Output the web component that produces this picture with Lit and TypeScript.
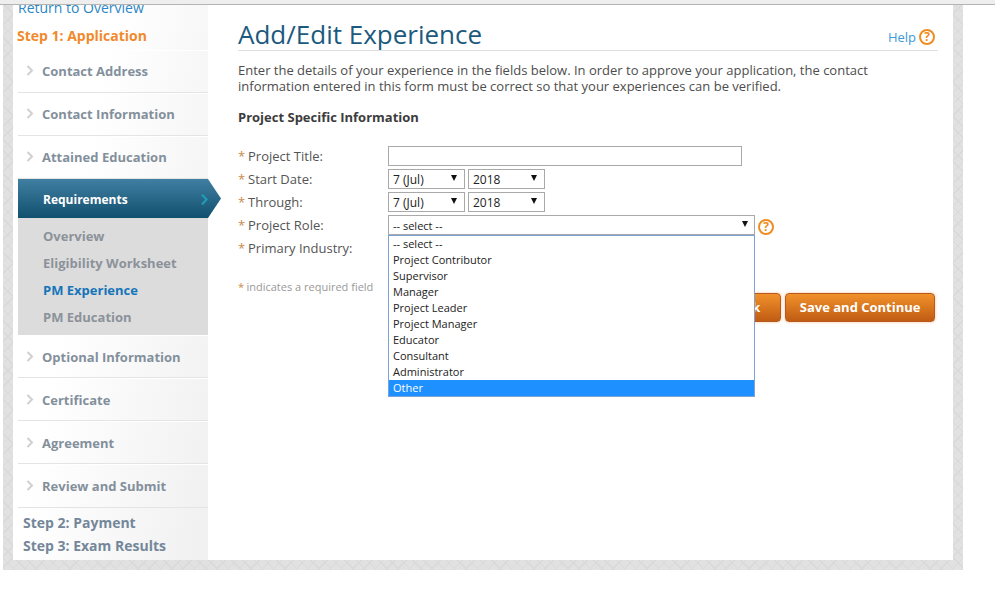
import { LitElement, html, css } from "lit";
import { customElement } from "lit/decorators.js";

const ROLES = [
  "-- select --",
  "Project Contributor",
  "Supervisor",
  "Manager",
  "Project Leader",
  "Project Manager",
  "Educator",
  "Consultant",
  "Administrator",
  "Other",
];

const chevron = html`<svg class="chev" width="8" height="11" viewBox="0 0 8 11"><path d="M1.5 1l4.5 4.5-4.5 4.5" fill="none" stroke="#d0d0d0" stroke-width="2"/></svg>`;
const caret = html`<svg class="caret" width="6" height="6" viewBox="0 0 6 6"><path d="M0 0h6L3 6z" fill="#111"/></svg>`;
const helpIcon = html`<span class="help-icon">?</span>`;

@customElement("app-root")
export class AppRoot extends LitElement {
  static styles = css`
    :host {
      display: block;
      width: 995px;
      height: 590px;
      background: #fff;
      font-family: "Open Sans", "DejaVu Sans", sans-serif;
      overflow: hidden;
    }
    .topbar {
      height: 4px;
      background: #eeeeee;
      border-bottom: 1px solid #b4b4b4;
    }
    .frame {
      margin-left: 3px;
      width: 960px;
      height: 565px;
      box-sizing: border-box;
      padding: 0 10px 10px;
      background-color: #e1e1e1;
      background-image: repeating-linear-gradient(45deg, #d9d9d9 0 1px, transparent 1px 8px),
        repeating-linear-gradient(-45deg, #d9d9d9 0 1px, transparent 1px 8px);
    }
    .inner {
      display: flex;
      height: 555px;
      background: #fff;
      overflow: hidden;
    }
    .side {
      width: 195px;
      flex: none;
      box-sizing: border-box;
      padding-left: 5px;
      background: linear-gradient(100deg, #ffffff 0%, #ffffff 35%, #f0f0f0 100%);
    }
    .return {
      margin-top: -7px;
      height: 20px;
      line-height: 20px;
      font-size: 14px;
      color: #2b86c5;
    }
    .step1 {
      height: 32px;
      line-height: 36px;
      font-size: 14px;
      font-weight: 700;
      color: #f08a2c;
      margin-left: -1px;
    }
    .row {
      display: flex;
      align-items: center;
      height: 43px;
      box-sizing: border-box;
      border-top: 1px solid #fff;
      border-bottom: 1px solid #e4e4e4;
      font-size: 13px;
      font-weight: 700;
      color: #83909c;
    }
    .upper .row {
      padding-bottom: 2px;
    }
    .chev {
      margin-left: 8px;
      margin-right: 8px;
      margin-top: -1px;
      flex: none;
    }
    .active {
      display: flex;
      align-items: center;
      justify-content: space-between;
      position: relative;
      width: 203px;
      height: 39px;
      box-sizing: border-box;
      padding: 1px 13px 0 25px;
      clip-path: polygon(0 0, 190px 0, 203px 50%, 190px 100%, 0 100%);
      background: linear-gradient(#417fa2, #12506f);
      color: #fff;
      font-size: 12px;
      font-weight: 700;
    }
    .sub {
      width: 190px;
      height: 117px;
      box-sizing: border-box;
      padding: 5px 0 0 25px;
      background: #dcdcdc;
      font-size: 13px;
      font-weight: 700;
      color: #8b929a;
    }
    .sub div {
      height: 27px;
      line-height: 27px;
    }
    .sub .on {
      color: #1675b9;
    }
    .lower .row:last-child {
      height: 44px;
    }
    .steps {
      padding: 3px 0 0 5px;
      font-size: 14px;
      font-weight: 700;
      color: #74879a;
    }
    .steps div {
      height: 23px;
      line-height: 23px;
    }
    .main {
      flex: 1;
      min-width: 0;
      padding: 0 15px 0 30px;
    }
    .head {
      display: flex;
      align-items: flex-end;
      justify-content: space-between;
      height: 46px;
      box-sizing: border-box;
      border-bottom: 1px solid #dfdfdf;
    }
    h1 {
      margin: 0 0 -2px;
      font-size: 26px;
      line-height: 36px;
      font-weight: 400;
      color: #1b5a7e;
    }
    .help {
      display: flex;
      align-items: center;
      gap: 3px;
      font-size: 13px;
      color: #3b9ad6;
      padding-bottom: 4px;
      margin-right: 3px;
    }
    .help-icon {
      display: inline-block;
      width: 16px;
      height: 16px;
      box-sizing: border-box;
      border: 2px solid #ef8d22;
      border-radius: 50%;
      color: #ef8d22;
      font-size: 12px;
      font-weight: 700;
      line-height: 12px;
      text-align: center;
    }
    .intro {
      margin: 11px 0 0;
      width: 660px;
      font-size: 13px;
      line-height: 16px;
      color: #4d4d4d;
    }
    h2 {
      margin: 15px 0 0;
      font-size: 13px;
      line-height: 16px;
      font-weight: 700;
      color: #3c3c3c;
    }
    .form {
      margin-top: 21px;
      display: grid;
      grid-template-columns: 150px 1fr;
      grid-auto-rows: 23px;
    }
    .label {
      font-size: 13px;
      line-height: 20px;
      color: #555;
    }
    .req {
      color: #c98a4a;
      margin-right: -0.5px;
    }
    .field {
      display: flex;
      gap: 3px;
      align-items: flex-start;
    }
    input {
      display: block;
      width: 354px;
      height: 20px;
      box-sizing: border-box;
      border: 1px solid #a9a9a9;
      padding: 0;
      margin: 0;
      background: #fff;
    }
    .select {
      display: flex;
      align-items: center;
      justify-content: space-between;
      width: 77px;
      height: 20px;
      box-sizing: border-box;
      border: 1px solid #a9a9a9;
      padding: 0 7px 0 4px;
      background: #fff;
      font-size: 12px;
      color: #222;
    }
    .select.role {
      width: 367px;
      padding-right: 6px;
      font-size: 11px;
    }
    .caret {
      margin-top: -3px;
    }
    .role-wrap {
      position: relative;
    }
    .role-wrap .help-icon {
      margin: 4px 0 0 0;
    }
    .menu {
      position: absolute;
      z-index: 2;
      left: 0;
      top: 20px;
      width: 367px;
      box-sizing: border-box;
      border: 1px solid #7da2d8;
      background: #fff;
      font-size: 11px;
      color: #222;
    }
    .menu div {
      height: 16px;
      line-height: 16px;
      padding-left: 4px;
    }
    .menu .hi {
      background: #1e90ff;
      color: #fff;
    }
    .note {
      margin-top: 18px;
      font-size: 11px;
      line-height: 16px;
      color: #999;
    }
    .actions {
      display: flex;
      justify-content: flex-end;
      gap: 4px;
      margin: -2px 3px 0 0;
    }
    .btn {
      height: 29px;
      box-sizing: border-box;
      padding: 0 13.5px 2px;
      border: 1px solid #b9591d;
      border-radius: 4px;
      background: linear-gradient(#f1912a, #c05c14);
      box-shadow: 0 0 3px rgba(240, 150, 70, 0.6);
      color: #fff;
      font-family: inherit;
      font-size: 13px;
      font-weight: 700;
    }
    .btn.back {
      padding: 0 20px 2px;
    }
  `;

  render() {
    return html`
      <div class="topbar"></div>
      <div class="frame">
        <div class="inner">
          <aside class="side">
            <div class="return">Return to Overview</div>
            <div class="step1">Step 1: Application</div>
            <div class="upper">
              ${["Contact Address", "Contact Information", "Attained Education"].map(
                (t) => html`<div class="row">${chevron}${t}</div>`,
              )}
            </div>
            <div class="active">
              Requirements
              <svg width="7" height="11" viewBox="0 0 7 11"><path d="M1 .5l4.5 5-4.5 5" fill="none" stroke="#1f9cb4" stroke-width="2.2"/></svg>
            </div>
            <div class="sub">
              <div>Overview</div>
              <div>Eligibility Worksheet</div>
              <div class="on">PM Experience</div>
              <div>PM Education</div>
            </div>
            <div class="lower">
              ${["Optional Information", "Certificate", "Agreement", "Review and Submit"].map(
                (t) => html`<div class="row">${chevron}${t}</div>`,
              )}
            </div>
            <div class="steps">
              <div>Step 2: Payment</div>
              <div>Step 3: Exam Results</div>
            </div>
          </aside>
          <main class="main">
            <div class="head">
              <h1>Add/Edit Experience</h1>
              <div class="help">Help ${helpIcon}</div>
            </div>
            <p class="intro">
              Enter the details of your experience in the fields below. In order to approve your application, the contact
              information entered in this form must be correct so that your experiences can be verified.
            </p>
            <h2>Project Specific Information</h2>
            <div class="form">
              <div class="label"><span class="req">*</span> Project Title:</div>
              <div class="field"><input type="text" /></div>
              <div class="label"><span class="req">*</span> Start Date:</div>
              <div class="field">
                <div class="select">7 (Jul)${caret}</div>
                <div class="select">2018${caret}</div>
              </div>
              <div class="label"><span class="req">*</span> Through:</div>
              <div class="field">
                <div class="select">7 (Jul)${caret}</div>
                <div class="select">2018${caret}</div>
              </div>
              <div class="label"><span class="req">*</span> Project Role:</div>
              <div class="field role-wrap">
                <div class="select role">-- select --${caret}</div>
                ${helpIcon}
                <div class="menu">
                  ${ROLES.map((r) => html`<div class=${r === "Other" ? "hi" : ""}>${r}</div>`)}
                </div>
              </div>
              <div class="label"><span class="req">*</span> Primary Industry:</div>
              <div class="field"></div>
            </div>
            <div class="note"><span class="req">*</span> indicates a required field</div>
            <div class="actions">
              <button class="btn back">Back</button>
              <button class="btn">Save and Continue</button>
            </div>
          </main>
        </div>
      </div>
    `;
  }
}
